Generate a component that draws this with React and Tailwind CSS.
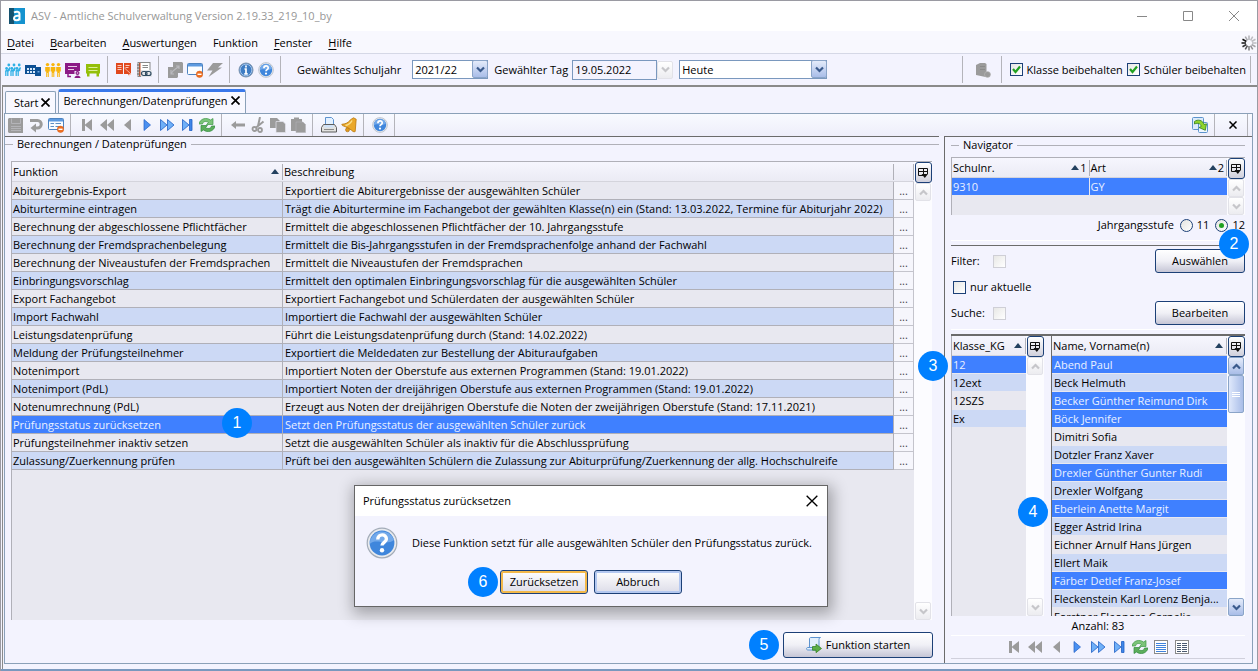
import React, { useId, useState } from "react";
import clsx from "clsx";

const FUNKTIONEN = [
  ["Abiturergebnis-Export", "Exportiert die Abiturergebnisse der ausgewählten Schüler"],
  ["Abiturtermine eintragen", "Trägt die Abiturtermine im Fachangebot der gewählten Klasse(n) ein (Stand: 13.03.2022, Termine für Abiturjahr 2022)"],
  ["Berechnung der abgeschlossene Pflichtfächer", "Ermittelt die abgeschlossenen Pflichtfächer der 10. Jahrgangsstufe"],
  ["Berechnung der Fremdsprachenbelegung", "Ermittelt die Bis-Jahrgangsstufen in der Fremdsprachenfolge anhand der Fachwahl"],
  ["Berechnung der Niveaustufen der Fremdsprachen", "Ermittelt die Niveaustufen der Fremdsprachen"],
  ["Einbringungsvorschlag", "Ermittelt den optimalen Einbringungsvorschlag für die ausgewählten Schüler"],
  ["Export Fachangebot", "Exportiert Fachangebot und Schülerdaten der ausgewählten Schüler"],
  ["Import Fachwahl", "Importiert die Fachwahl der ausgewählten Schüler"],
  ["Leistungsdatenprüfung", "Führt die Leistungsdatenprüfung durch (Stand: 14.02.2022)"],
  ["Meldung der Prüfungsteilnehmer", "Exportiert die Meldedaten zur Bestellung der Abituraufgaben"],
  ["Notenimport", "Importiert Noten der Oberstufe aus externen Programmen (Stand: 19.01.2022)"],
  ["Notenimport (PdL)", "Importiert Noten der dreijährigen Oberstufe aus externen Programmen (Stand: 19.01.2022)"],
  ["Notenumrechnung (PdL)", "Erzeugt aus Noten der dreijährigen Oberstufe die Noten der zweijährigen Oberstufe (Stand: 17.11.2021)"],
  ["Prüfungsstatus zurücksetzen", "Setzt den Prüfungsstatus der ausgewählten Schüler zurück"],
  ["Prüfungsteilnehmer inaktiv setzen", "Setzt die ausgewählten Schüler als inaktiv für die Abschlussprüfung"],
  ["Zulassung/Zuerkennung prüfen", "Prüft bei den ausgewählten Schülern die Zulassung zur Abiturprüfung/Zuerkennung der allg. Hochschulreife"],
];

const KLASSEN = ["12", "12ext", "12SZS", "Ex"];

const SCHUELER = [
  ["Abend Paul", true],
  ["Beck Helmuth", false],
  ["Becker Günther Reimund Dirk", true],
  ["Böck Jennifer", true],
  ["Dimitri Sofia", false],
  ["Dotzler Franz Xaver", false],
  ["Drexler Günther Gunter Rudi", true],
  ["Drexler Wolfgang", false],
  ["Eberlein Anette Margit", true],
  ["Egger Astrid Irina", false],
  ["Eichner Arnulf Hans Jürgen", false],
  ["Ellert Maik", false],
  ["Färber Detlef Franz-Josef", true],
  ["Fleckenstein Karl Lorenz Benja...", false],
  ["Forstner Eleonore Cornelia", false],
];

const GRAY = "#9b9b9b";
const BLUE = "#4a90f0";
const EDGE = "#1f5fc4";

const Icon = ({ children, size = 16 }) => (
  <svg width={size} height={size} viewBox="0 0 16 16" fill="none" aria-hidden="true" className="shrink-0">
    {children}
  </svg>
);

/* ---------- icons ---------- */

const People = () => (
  <Icon>
    {[1.8, 7, 12.2].map((x) => (
      <g key={x}>
        <circle cx={x + 2} cy="3" r="1.4" fill="#2fb0e6" />
        <circle cx={x - 0.2} cy="6.500" r="1.400" fill="#2fb0e6" />
        <path d={`M${x + 3.4} 5.500l-2.600 3.500M${x - 1.4} 8.800h3l1.500-1.300`} stroke="#2fb0e6" strokeWidth="1.600" />
        <path d={`M${x - 1} 9v5M${x + 1} 9v5`} stroke="#2fb0e6" strokeWidth="1.300" />
      </g>
    ))}
  </Icon>
);

const School = () => (
  <Icon>
    <path d="M0 3h11v2h5v9H10v-2H0z" fill="#0d4f94" />
    <path d="M2 6h2v2H2zM5 6h2v2H5zM8 6h2v2H8zM2 9h2v2H2zM5 9h2v2H5zM8 9h2v2H8z" fill="#d6e8fa" />
    <path d="M12.500 9h2v1.500h-2z" fill="#6fa6e0" />
  </Icon>
);

const Group = () => (
  <Icon>
    {[2.5, 8, 13.5].map((x) => (
      <g key={x} fill="#f8b50c">
        <circle cx={x} cy="2.600" r="1.700" />
        <path d={`M${x - 2.3} 5h4.600v4.500h-1V15h-1v-4h-.6v4h-1V9.500h-1z`} />
      </g>
    ))}
  </Icon>
);

const Board = () => (
  <Icon>
    <path d="M0 1h15v11H0z" fill="#8b1a86" />
    <path d="M3 4.500h9M3 7.500h6" stroke="#e8c8e6" />
    <path d="M3 12v2.500h3" stroke="#8b1a86" strokeWidth="1.500" />
    <path d="M9.500 9h6v7h-6z" fill="#f3f3fe" />
    <circle cx="12.500" cy="11" r="2" fill="#8b1a86" />
    <path d="M9.500 16c0-3.500 6-3.500 6 0z" fill="#8b1a86" />
    <circle cx="12.500" cy="11" r=".8" fill="#e8c8e6" />
  </Icon>
);

const Chat = () => (
  <Icon>
    <path d="M1 2h14v9.500H1zM2 11h2.500v3.500H2zM11.500 11H14v3.500h-2.500z" fill="#94bf0a" />
    <path d="M3.500 5.500h9M3.500 8.500h9" stroke="#dcee9a" />
  </Icon>
);

const Book = () => (
  <Icon>
    <path d="M0 1h7v11H0zM8 1h7v11H8z" fill="#e1481d" />
    <path d="M1.500 3.500h4M1.500 5.500h4M1.500 7.500h4M9.500 3.500h4M9.500 5.500h3" stroke="#fbd8cc" strokeWidth=".9" />
    <path d="M8.500 6l7 6.500-2.500.3 1 2.700" fill="#e1481d" stroke="#fff" strokeWidth=".6" />
  </Icon>
);

const AddressBook = () => (
  <Icon>
    <rect x="2" y=".5" width="12" height="14" fill="#fff" stroke="#8a8a8a" />
    <path d="M3 1h1.500v13H3z" fill="#c8542e" />
    <path d="M1 3h3M1 6h3M1 9h3M1 12h3" stroke="#666" strokeWidth="1.200" />
    <path d="M6.500 3.500H12M6.500 5.500H12" stroke="#888" />
    <path d="M5 8h11v7H5z" fill="#e4e6ea" />
    <rect x="5.500" y="9.500" width="5.500" height="4" rx="2" stroke="#2f4a60" strokeWidth="1.200" />
    <rect x="9.500" y="9.500" width="5.500" height="4" rx="2" stroke="#2f4a60" strokeWidth="1.200" />
  </Icon>
);

const GrayCopy = () => (
  <Icon>
    <path d="M6 0h9l1 1v10h-5v4l-1 1H1V5h5z" fill={GRAY} />
    <path d="M4 8v4h3M4.500 11.500C6 7.500 9 7.500 12 4M9 4h3v3" stroke="#b9b9bd" strokeWidth="1.200" />
  </Icon>
);

const FormRemove = ({ lines }) => (
  <Icon>
    <rect x=".5" y="1.500" width="15" height="11" rx="1" fill="#fbfdff" stroke="#4d83c0" />
    <path d="M1 2h14v2.500H1z" fill="#5d9ae0" />
    {lines && <path d="M2.500 6.500H6M7.500 6.500H13M2.500 9.500H6M7.500 9.500H13" stroke="#5f8fc4" />}
    <circle cx="12.500" cy="12.300" r="3.200" fill="#f07022" stroke="#d65a12" strokeWidth=".5" />
    <path d="M10.500 12.300h4" stroke="#fff" strokeWidth="1.400" />
  </Icon>
);

const Flash = () => (
  <Icon>
    <path d="M6 1h10l-5 4.500h4L1.500 15l4-6.500H0z" fill={GRAY} />
  </Icon>
);

const Info = () => (
  <Icon>
    <circle cx="8" cy="8" r="7" fill="#3e7cc4" stroke="#7d93ad" />
    <circle cx="8" cy="8" r="5.800" stroke="#b6d2f2" strokeWidth=".8" />
    <path d="M8 3.600v1.800M6.500 7H8v4.600M6.300 11.800h3.400" stroke="#fff" strokeWidth="1.700" />
  </Icon>
);

const Help = ({ size }) => (
  <Icon size={size}>
    <circle cx="8" cy="8" r="7.400" fill="#e8eaee" stroke="#a3acb8" strokeWidth=".6" />
    <circle cx="8" cy="8" r="6.200" fill="#3f86dc" />
    <path d="M1.900 8.500C5 5.500 10 9.500 14 6.500A6.200 6.200 0 0 0 1.900 8.500z" fill="#7fb2ee" opacity=".8" />
    <path d="M5.900 6.300c0-3.200 4.400-3 4.300-.3 0 1.600-2.200 1.700-2.200 3.200" stroke="#fff" strokeWidth="1.700" />
    <circle cx="8" cy="11.600" r="1.100" fill="#fff" />
  </Icon>
);

const Save = () => (
  <Icon>
    <path d="M0 2l1-1h14v15H1l-1-1z" fill={GRAY} />
    <path d="M3.500 1.500v5h9v-5M3 9.500h10M3 11.500h10M3 13.500h10" stroke="#b4b4b8" />
  </Icon>
);

const Undo = () => (
  <Icon>
    <path d="M2 3.500h7.500a3.500 3.500 0 0 1 0 7.500H7" stroke={GRAY} strokeWidth="3" />
    <path d="M8 6.500v9L2.500 11z" fill={GRAY} />
  </Icon>
);

const First = () => (
  <Icon>
    <path d="M3 2h3v12H3zM13 2v12L5.500 8z" fill={GRAY} />
  </Icon>
);
const Rewind = () => (
  <Icon>
    <path d="M8 2v12L1 8zM15 2v12L8 8z" fill={GRAY} />
  </Icon>
);
const Back = () => (
  <Icon>
    <path d="M12 2v12L5 8z" fill={GRAY} />
  </Icon>
);
const Play = () => (
  <Icon>
    <path d="M5 2.500v11L11.500 8z" fill={BLUE} stroke={EDGE} strokeWidth=".7" />
  </Icon>
);
const Forward = () => (
  <Icon>
    <path d="M1.500 2.500v11L8 8zM8.500 2.500v11L15 8z" fill="#6fb0f8" stroke={EDGE} strokeWidth=".8" />
  </Icon>
);
const Last = () => (
  <Icon>
    <path d="M3.500 2.500v11L10 8z" fill="#6fb0f8" stroke={EDGE} strokeWidth=".8" />
    <path d="M10.500 2.500H13v11h-2.500z" fill="#3f86e8" stroke={EDGE} strokeWidth=".8" />
  </Icon>
);
const Refresh = () => (
  <Icon>
    <path d="M0 7C1 1.500 7.500 0 11.500 3L14 1.500V7.500H7.500L9.500 5.500C7.500 4 4 4 3.500 7z" fill="#7cc47a" stroke="#3f9a48" strokeWidth=".7" />
    <path d="M16 9c-1 5.500-7.500 7-11.500 4L2 14.500V8.500h6.500l-2 2c2 1.500 5.500 1.500 6-1.500z" fill="#5cae5c" stroke="#2f8a3c" strokeWidth=".7" />
  </Icon>
);

const ArrowLeft = () => (
  <Icon>
    <path d="M1 8l5-4v2.500h9v3H6V12z" fill={GRAY} />
  </Icon>
);
const Cut = () => (
  <Icon>
    <path d="M10 0L8 9M13.500 4.500L5.500 11" stroke={GRAY} strokeWidth="2" />
    <circle cx="4.500" cy="12" r="2" stroke={GRAY} strokeWidth="1.800" />
    <circle cx="10" cy="13" r="2" stroke={GRAY} strokeWidth="1.800" />
  </Icon>
);
const Copy = () => (
  <Icon>
    <path d="M0 1h7l2.500 2.500V11H0z" fill={GRAY} />
    <path d="M6 4.500h7l2.500 2.500v8.500H6z" fill={GRAY} stroke="#e4e4ee" strokeWidth=".7" />
  </Icon>
);
const Paste = () => (
  <Icon>
    <path d="M1 2h3V.5h5V2h3v12H1z" fill={GRAY} />
    <path d="M6 5h7l2.500 2.500v8H6z" fill={GRAY} stroke="#b4b4b8" strokeWidth=".6" />
  </Icon>
);
const Printer = () => (
  <Icon>
    <path d="M4.500 8V.5h6l2 2V8" fill="#e4f1ff" stroke="#5d93cf" />
    <path d="M2.500 7.500h11l2 3v4.500H.5v-4.500z" fill="#e2e2e0" stroke="#5d5d5d" />
    <path d="M3.500 8h9v2.500h-9z" fill="#cfe2f8" />
    <path d="M3 12.500h10" stroke="#8a8a8a" />
  </Icon>
);
const Bell = () => (
  <Icon>
    <path d="M12.500.8l2.700 1.400-1 12.300c-1.500.9-2.800-.4-4-1.600L4 9.500C2 9 .8 8.500.8 7.300c4-.3 6-1.500 8.200-4 1-1.200 2-1.500 3.500-2.500z" fill="#eaa82b" stroke="#b9770f" strokeWidth=".8" />
    <path d="M11 3.500C9.500 6.500 7 8 4.500 8.500" stroke="#fbe08c" strokeWidth="1.500" />
    <circle cx="6.500" cy="12.800" r="2" fill="#e09a1c" stroke="#a9690c" strokeWidth=".6" />
  </Icon>
);
const Export = () => (
  <Icon>
    <rect x=".5" y=".5" width="11" height="12" rx="1" fill="#dcebfb" stroke="#5b93cc" />
    <rect x="6.500" y="5.500" width="9" height="10" rx="1" fill="#eef6ff" stroke="#5b93cc" />
    <path d="M2.500 4.500c3-2.500 8.500-1.500 9.500 3l2.500-.7-1.200 6.500L7 10.500l2.200-1C8.500 6.500 6 5.500 2.500 7z" fill="#8ed42c" stroke="#2f7d1a" strokeWidth=".8" />
  </Icon>
);
const GrayDb = () => (
  <Icon>
    <path d="M1 3l4-2h5l1.500 1v8H13l2.500 2-1 3h-4L1 13z" fill={GRAY} />
    <path d="M5 4.500h5M5 7.500h5" stroke="#8a8a8a" />
    <circle cx="12.500" cy="12.500" r="3" fill={GRAY} stroke="#c0c0c0" strokeWidth=".5" />
  </Icon>
);
const Script = () => (
  <Icon>
    <path d="M4.500.5h10c-1.500.5-1.500 1.500-1.500 3V13H2c-2 0-2-2.500 0-2.500h1.500V2C3.500 1 4 .5 4.500.5z" fill="#e2effc" stroke="#5d93cf" />
    <path d="M2 10.500h7" stroke="#5d93cf" />
    <path d="M6.500 9.500H10V7l5.500 4.500L10 15.700v-2.500H6.500z" fill="#5cae46" stroke="#2f7d1a" strokeWidth=".7" />
  </Icon>
);
const ListIcon = ({ split }) => (
  <Icon>
    <rect x="1.500" y="1.500" width="13" height="13" fill="#fff" stroke="#8a8a8a" />
    {split ? (
      <path d="M3 4.500h4M8 4.500h5M3 6.500h4M8 6.500h5M3 8.500h4M8 8.500h5M3 10.500h4M8 10.500h5M3 12.500h4M8 12.500h5" stroke="#4a5a70" />
    ) : (
      <path d="M3 4.500h10M3 6.500h10M3 8.500h10M3 10.500h10M3 12.500h10" stroke="#3f82dc" />
    )}
  </Icon>
);

const Spinner = () => (
  <svg width="16" height="16" viewBox="0 0 16 16" aria-hidden="true">
    {Array.from({ length: 12 }, (_, i) => (
      <path
        key={i}
        d="M8 .5v4.500"
        stroke="#111"
        strokeWidth="1.500"
        transform={`rotate(${i * 30} 8 8)`}
        opacity={[0.3, 0.25, 0.25, 0.25, 0.35, 0.45, 0.55, 0.7, 0.85, 1, 1, 0.35][i]}
      />
    ))}
  </svg>
);

const SortUp = () => (
  <svg width="8" height="5" viewBox="0 0 8 5" aria-hidden="true" className="mr-px shrink-0">
    <path d="M4 0l4 5H0z" fill="#23415f" />
  </svg>
);

const Chevron = ({ up, color = "#3a5a8c" }) => (
  <svg width="9" height="7" viewBox="0 0 9 7" aria-hidden="true">
    <path d={up ? "M1 5.500l3.500-3.500L8 5.500" : "M1 1.500L4.500 5 8 1.500"} fill="none" stroke={color} strokeWidth="2.200" />
  </svg>
);

const Cross = ({ size = 9, width = 1.7 }) => (
  <svg width={size} height={size} viewBox="0 0 9 9" aria-hidden="true">
    <path d="M.5.5l8 8M8.500.5l-8 8" stroke="#000" strokeWidth={width} />
  </svg>
);

/* ---------- small controls ---------- */

const Tool = ({ label, children }) => (
  <button aria-label={label} className="flex h-5 w-5 shrink-0 items-center justify-center">
    {children}
  </button>
);

const Sep = () => <div className="ml-1 mr-1.5 w-px shrink-0 self-stretch bg-[#b4b4ba]" />;

const Badge = ({ n, className }) => (
  <span
    className={clsx(
      "flex h-[30px] w-[30px] shrink-0 items-center justify-center rounded-full bg-[#0080ff] font-['Liberation_Sans',sans-serif] text-base leading-none text-white",
      className
    )}
  >
    {n}
  </span>
);

const Button = ({ children, className }) => (
  <button
    className={clsx(
      "flex items-center justify-center gap-1 rounded-[3px] border border-[#1c4077] bg-linear-to-b from-white via-[#f0f0f6] to-[#c6c6d6]",
      className
    )}
  >
    {children}
  </button>
);

const ArrowCap = ({ disabled, up }) => (
  <span
    className={clsx(
      "flex h-[18px] w-4 items-center justify-center rounded-[2px] border",
      disabled
        ? "border-[#e2e2e8] bg-linear-to-b from-white to-[#ececf0]"
        : "border-[#8aa4c8] bg-linear-to-b from-[#e4ebfa] to-[#a9bde8]"
    )}
  >
    <Chevron up={up} color={disabled ? "#c6c6ca" : "#3a5a8c"} />
  </span>
);

const Select = ({ label, options, className }) => (
  <div className={clsx("relative h-[19px]", className)}>
    <select
      aria-label={label}
      className="h-full w-full appearance-none rounded-none border border-[#7a98be] bg-white px-0.5 leading-4 outline-none"
    >
      {options.map((o) => (
        <option key={o}>{o}</option>
      ))}
    </select>
    <span className="pointer-events-none absolute right-0 top-0 flex">
      <ArrowCap />
    </span>
  </div>
);

// labelFirst puts the text left of the box
const Check = ({ label, initial = false, disabled = false, labelFirst = false }) => {
  const [on, setOn] = useState(initial);
  const id = useId();
  return (
    <div className={clsx("flex items-center", labelFirst ? "flex-row-reverse gap-3" : "gap-1")}>
      <span className="grid h-[13px] w-[13px] shrink-0">
        <input
          id={id}
          type="checkbox"
          checked={on}
          disabled={disabled}
          onChange={() => setOn(!on)}
          className={clsx(
            "col-start-1 row-start-1 h-[13px] w-[13px] appearance-none border bg-linear-to-br from-[#e8e8e6] to-white",
            disabled ? "border-[#cfcfd6]" : "border-[#1c4077]"
          )}
        />
        {on && (
          <svg viewBox="0 0 13 13" className="pointer-events-none col-start-1 row-start-1" aria-hidden="true">
            <path d="M3 6l2.500 3L10 3.500" fill="none" stroke="#21a121" strokeWidth="2.200" />
          </svg>
        )}
      </span>
      <label htmlFor={id} className={clsx(labelFirst && "w-[30px] whitespace-nowrap")}>
        {label}
      </label>
    </div>
  );
};

const Radio = ({ value, checked, onChange }) => (
  <label className="flex items-center gap-1">
    <span className="grid h-[13px] w-[13px] place-items-center">
      <input
        type="radio"
        name="jahrgang"
        checked={checked}
        onChange={onChange}
        className="col-start-1 row-start-1 h-[13px] w-[13px] appearance-none rounded-full border border-[#1c4077] bg-linear-to-br from-[#e4e4e0] to-white"
      />
      {checked && <span className="pointer-events-none z-10 col-start-1 row-start-1 h-[5px] w-[5px] rounded-full bg-[#21a121]" />}
    </span>
    {value}
  </label>
);

const ColumnControl = () => (
  <button
    aria-label="Spalten auswählen"
    className="flex h-[21px] w-[17px] shrink-0 items-center justify-center rounded-[3px] border border-[#1c4077] bg-linear-to-b from-white to-[#d0d0dc]"
  >
    <svg width="11" height="12" viewBox="0 0 11 12" aria-hidden="true">
      <path d="M5 8.500H.5v-7h9V7M.5 4.500h9M5.500 1.500v6" fill="none" stroke="#111" />
      <path d="M3.500 7H10L6.800 11z" fill="#111" />
    </svg>
  </button>
);

const ScrollColumn = ({ active }) => (
  <div className="flex w-[18px] shrink-0 flex-col items-center bg-[#fcfcff]">
    <ColumnControl />
    <ArrowCap up disabled={!active} />
    {active && (
      <div className="flex h-[38px] w-4 flex-col items-center justify-center gap-px rounded-[2px] border border-[#8aa4c8] bg-linear-to-r from-[#dfe8fb] to-[#a9bde8]">
        <div className="h-px w-2 bg-white" />
        <div className="h-px w-2 bg-white" />
        <div className="h-px w-2 bg-white" />
      </div>
    )}
    <div className="flex-1" />
    <ArrowCap disabled={!active} />
  </div>
);

const Legend = ({ children }) => (
  <div className="flex h-3.5 shrink-0 items-center gap-1">
    <div className="h-px w-2 bg-[#b0b0b8]" />
    <h2>{children}</h2>
    <div className="h-px flex-1 bg-[#b0b0b8]" />
  </div>
);

const Th = ({ children, sort, order }) => (
  <th className="h-5 border-b border-[#d4d4dc] bg-linear-to-b from-[#f6f6fe] to-[#ebebf4] p-0 font-normal">
    <div className="flex h-4 items-center border-r border-[#b0b0b8] pl-px pr-0.5">
      <span className="flex-1 text-left">{children}</span>
      {sort && <SortUp />}
      {order}
    </div>
  </th>
);

const rowColor = (i, selected) => (selected ? "bg-[#3f80ff] text-[#eaf0ff]" : i % 2 ? "bg-[#ccd9f5]" : "bg-[#e8e8f0]");

const NavButtons = () => (
  <>
    <Tool label="Erster"><First /></Tool>
    <Tool label="Schnell zurück"><Rewind /></Tool>
    <Tool label="Zurück"><Back /></Tool>
    <Tool label="Weiter"><Play /></Tool>
    <Tool label="Schnell weiter"><Forward /></Tool>
    <Tool label="Letzter"><Last /></Tool>
    <Tool label="Aktualisieren"><Refresh /></Tool>
  </>
);

/* ---------- sections ---------- */

const TitleBar = () => (
  <header className="flex h-[30px] shrink-0 items-center bg-white pl-2 text-[#979797]">
    <svg width="16" height="16" viewBox="0 0 16 16" aria-hidden="true">
      <path d="M0 0h16v16H0z" fill="#1593cf" />
      <path d="M0 0h5v16H0z" fill="#15526f" />
      <path d="M5 4.500c2-1.300 5.500-1.300 5.500 1.500v6.500M10.500 8C7.500 7.500 5 8 5 10.300c0 2.700 4.500 2.700 5.500 0" fill="none" stroke="#fff" strokeWidth="2" />
    </svg>
    <h1 className="ml-1.5 flex-1">ASV - Amtliche Schulverwaltung Version 2.19.33_219_10_by</h1>
    <div className="flex gap-9 pr-[18px]">
      <button aria-label="Minimieren">
        <svg width="10" height="10"><path d="M0 5.500h10" stroke="#888" /></svg>
      </button>
      <button aria-label="Maximieren">
        <svg width="10" height="10"><path d="M.5.5h9v9h-9z" fill="none" stroke="#888" /></svg>
      </button>
      <button aria-label="Schließen">
        <svg width="10" height="10"><path d="M0 0l10 10M10 0L0 10" stroke="#888" /></svg>
      </button>
    </div>
  </header>
);

const MENU = [
  ["D", "atei"],
  ["B", "earbeiten"],
  ["A", "uswertungen"],
  ["", "Funktion"],
  ["F", "enster"],
  ["H", "ilfe"],
];

const MenuBar = () => (
  <nav className="flex h-[23px] shrink-0 items-center gap-4 border-b border-[#d5d8e6] bg-[#f8f8fe] pl-1.5 pt-0.5">
    {MENU.map(([key, rest]) => (
      <button key={rest}>
        <span className="underline underline-offset-2">{key}</span>
        {rest}
      </button>
    ))}
    <span className="ml-auto">
      <Spinner />
    </span>
  </nav>
);

const MainToolbar = () => (
  <div className="flex h-[31px] shrink-0 items-center py-0.5 pl-0.5">
    <Tool label="Klassen"><People /></Tool>
    <Tool label="Schule"><School /></Tool>
    <Tool label="Schüler"><Group /></Tool>
    <Tool label="Unterricht"><Board /></Tool>
    <Tool label="Nachrichten"><Chat /></Tool>
    <Sep />
    <Tool label="Handbuch"><Book /></Tool>
    <Tool label="Adressen"><AddressBook /></Tool>
    <Sep />
    <Tool label="Übernehmen"><GrayCopy /></Tool>
    <Tool label="Formular schließen"><FormRemove /></Tool>
    <Tool label="Ausführen"><Flash /></Tool>
    <Sep />
    <Tool label="Info"><Info /></Tool>
    <Tool label="Hilfe"><Help size={16} /></Tool>
    <Sep />
    <span className="ml-2.5 mr-[11px]">Gewähltes Schuljahr</span>
    <Select label="Schuljahr" options={["2021/22"]} className="w-[76px]" />
    <label htmlFor="tag" className="ml-1.5 mr-1">Gewählter Tag</label>
    <input id="tag" readOnly defaultValue="19.05.2022" className="h-5 w-[85px] border border-[#7a98be] bg-[#f3f3fe] px-0.5 outline-none" />
    <ArrowCap disabled />
    <Select label="Zeitraum" options={["Heute"]} className="ml-1.5 w-[148px]" />
    <div className="ml-auto flex items-center self-stretch">
      <div className="mr-2.5 w-px self-stretch bg-[#b4b4ba]" />
      <Tool label="Datenbank"><GrayDb /></Tool>
      <div className="mx-2 w-px self-stretch bg-[#b4b4ba]" />
      <div className="flex gap-1">
        <Check label="Klasse beibehalten" initial />
        <Check label="Schüler beibehalten" initial />
      </div>
      <div className="ml-1 mr-1.5 w-px self-stretch bg-[#b4b4ba]" />
    </div>
  </div>
);

const Tabs = () => (
  <div className="flex h-[26px] shrink-0 items-end gap-0.5 pl-0.5" role="tablist">
    <div className="flex h-[22px] items-center gap-[3px] rounded-t-[2px] border border-b-0 border-[#8aa0b8] bg-[#f8f8ff] pl-2 pr-[5px]">
      <button role="tab" aria-selected="false">Start</button>
      <button aria-label="Start schließen"><Cross /></button>
    </div>
    <div className="flex h-6 items-center gap-[3px] rounded-t-[3px] border border-b-0 border-t-3 border-[#8aa0b8] border-t-[#3a78ea] bg-[#f8f8ff] pl-1 pr-[5px] pb-1">
      <button role="tab" aria-selected="true">Berechnungen/Datenprüfungen</button>
      <button aria-label="Berechnungen schließen"><Cross /></button>
    </div>
  </div>
);

const PanelToolbar = () => (
  <div className="flex h-[22px] shrink-0 items-center bg-linear-to-b from-[#f8faff] to-[#eeeefa] pl-px">
    <Tool label="Speichern"><Save /></Tool>
    <Tool label="Rückgängig"><Undo /></Tool>
    <Tool label="Formular"><FormRemove lines /></Tool>
    <Sep />
    <NavButtons />
    <Sep />
    <Tool label="Einfügen"><ArrowLeft /></Tool>
    <Tool label="Ausschneiden"><Cut /></Tool>
    <Tool label="Kopieren"><Copy /></Tool>
    <Tool label="Einsetzen"><Paste /></Tool>
    <Sep />
    <Tool label="Drucken"><Printer /></Tool>
    <Tool label="Benachrichtigung"><Bell /></Tool>
    <Sep />
    <Tool label="Hilfe"><Help size={16} /></Tool>
    <Sep />
    <div className="ml-auto flex items-center self-stretch pr-1">
      <Tool label="Export"><Export /></Tool>
      <div className="mx-1 w-px self-stretch bg-[#b4b4ba]" />
      <div className="px-1">
        <Tool label="Schließen"><Cross size={8} /></Tool>
      </div>
      <div className="w-px self-stretch bg-[#b4b4ba]" />
    </div>
  </div>
);

const FunctionPane = () => (
  <section className="flex min-w-0 flex-1 flex-col border-t border-[#6b6b6b]">
    <Legend>Berechnungen / Datenprüfungen</Legend>
    <div className="ml-1.5 mr-[7px] mt-2.5 flex min-h-0 flex-1 border-l border-t border-[#b0b0b8] bg-[#e8e8f0]">
      <div className="min-w-0 flex-1">
        <table className="w-full table-fixed border-separate border-spacing-0">
          <colgroup>
            <col className="w-[271px]" />
            <col />
            <col className="w-5" />
          </colgroup>
          <thead>
            <tr>
              <Th sort>Funktion</Th>
              <Th>Beschreibung</Th>
              <Th />
            </tr>
          </thead>
          <tbody>
            {FUNKTIONEN.map(([name, text], i) => (
              <tr key={name} className={rowColor(i, i === 13)}>
                <td className="relative h-[18px] whitespace-nowrap border-b border-r border-[#b0b0b8] p-0 pl-px">
                  {name}
                  {i === 13 && <Badge n="1" className="absolute -top-2 left-[210px] z-10" />}
                </td>
                <td className="h-[18px] overflow-hidden whitespace-nowrap border-b border-r border-[#b0b0b8] p-0 pl-0.5">{text}</td>
                <td className="h-[18px] border-b border-r border-[#c4c4cc] bg-[#f6f6fc] p-0 text-center text-[#444]">
                  <button aria-label={`${name} Details`} className="block w-full leading-4">...</button>
                </td>
              </tr>
            ))}
          </tbody>
        </table>
      </div>
      <ScrollColumn />
    </div>
    <div className="flex justify-end gap-1 pb-[3px] pr-1.5 pt-[10px]">
      <Badge n="5" />
      <Button className="my-0.5 h-[26px] w-[150px]">
        <Script />
        Funktion starten
      </Button>
    </div>
  </section>
);

const Navigator = () => {
  const [jahrgang, setJahrgang] = useState("12");
  return (
    <aside className="flex w-[308px] shrink-0 flex-col border-l border-t border-[#6b6b6b] pl-1.5 pr-[7px] pt-px">
      <Legend>Navigator</Legend>
      <div className="mt-[5px] flex h-[58px] shrink-0 border-l border-t border-[#b0b0b8] bg-[#e8e8f0]">
        <div className="flex-1">
          <table className="w-full table-fixed border-separate border-spacing-0">
            <thead>
              <tr>
                <Th sort order="1">Schulnr.</Th>
                <Th sort order="2">Art</Th>
              </tr>
            </thead>
            <tbody>
              <tr className="bg-[#3f80ff] text-[#eaf0ff]">
                <td className="h-[18px] border-b border-r border-[#e8e8f0] p-0 pl-px">9310</td>
                <td className="h-[18px] border-b border-[#e8e8f0] p-0 pl-px">GY</td>
              </tr>
            </tbody>
          </table>
        </div>
        <ScrollColumn />
      </div>
      <div className="flex h-5 shrink-0 items-center justify-end gap-1.5">
        <span>Jahrgangsstufe</span>
        <Radio value="11" checked={jahrgang === "11"} onChange={() => setJahrgang("11")} />
        <Radio value="12" checked={jahrgang === "12"} onChange={() => setJahrgang("12")} />
      </div>
      <div className="mt-[5px] h-1.5 shrink-0 border-t border-b border-b-[#6b6b6b] border-t-white" />
      <div className="flex shrink-0 flex-col gap-[3px] border-b border-white pb-1 pt-[3px]">
        <div className="flex items-center">
          <Check label="Filter:" disabled labelFirst />
          <div className="relative ml-auto">
            <Button className="h-6 w-[90px]">Auswählen</Button>
            <Badge n="2" className="absolute -right-1 -top-5 z-10" />
          </div>
        </div>
        <div className="flex h-[22px] items-center pl-0.5">
          <Check label="nur aktuelle" />
        </div>
        <div className="flex items-center">
          <Check label="Suche:" disabled labelFirst />
          <Button className="ml-auto h-6 w-[90px]">Bearbeiten</Button>
        </div>
      </div>
      <div className="mt-1 flex min-h-0 flex-1 border-t-2 border-[#6b6b6b]">
        <div className="relative flex w-[93px] shrink-0 border-l border-[#b0b0b8] bg-[#e8e8f0]">
          <div className="flex-1">
            <table className="w-full table-fixed border-separate border-spacing-0">
              <thead>
                <tr>
                  <Th sort>Klasse_KG</Th>
                </tr>
              </thead>
              <tbody>
                {KLASSEN.map((k, i) => (
                  <tr key={k} className={rowColor(i, i === 0)}>
                    <td className="h-[18px] border-b border-[#e8e8f0] p-0 pl-px">{k}</td>
                  </tr>
                ))}
              </tbody>
            </table>
          </div>
          <ScrollColumn />
          <Badge n="3" className="absolute -left-[34px] top-[15px] z-10" />
          <Badge n="4" className="absolute -right-1 top-[161px] z-10" />
        </div>
        <div className="ml-[7px] flex min-w-0 flex-1 overflow-hidden border-l border-[#6b6b6b] bg-[#e8e8f0]">
          <div className="min-w-0 flex-1 overflow-hidden">
            <table className="w-full table-fixed border-separate border-spacing-0">
              <thead>
                <tr>
                  <Th sort>Name, Vorname(n)</Th>
                </tr>
              </thead>
              <tbody>
                {SCHUELER.map(([name, selected], i) => (
                  <tr key={name} className={rowColor(i, selected)}>
                    <td className="h-[18px] whitespace-nowrap border-b border-[#e8e8f0] p-0 pl-0.5">{name}</td>
                  </tr>
                ))}
              </tbody>
            </table>
          </div>
          <ScrollColumn active />
        </div>
      </div>
      <div className="flex h-5 shrink-0 items-center justify-center border-b border-white">Anzahl: 83</div>
      <div className="mb-1 flex h-[23px] shrink-0 items-center justify-center gap-px border-b border-[#d0d0dc]">
        <NavButtons />
        <Tool label="Liste"><ListIcon /></Tool>
        <Tool label="Detailliste"><ListIcon split /></Tool>
      </div>
    </aside>
  );
};

const ResetDialog = () => (
  <div
    role="dialog"
    aria-labelledby="dialog-title"
    className="absolute left-[353px] top-[484px] z-20 w-[474px] border border-[#666] bg-[#f3f3fe] shadow-[2px_4px_14px_3px_rgba(0,0,0,0.3)]"
  >
    <div className="flex h-[30px] items-center justify-between bg-white pl-2 pr-[9px]">
      <h2 id="dialog-title">Prüfungsstatus zurücksetzen</h2>
      <button aria-label="Dialog schließen"><Cross size={12} width={1} /></button>
    </div>
    <div className="flex items-center gap-3.5 pl-[11px] pt-[11px]">
      <Help size={32} />
      <p className="whitespace-nowrap">Diese Funktion setzt für alle ausgewählten Schüler den Prüfungsstatus zurück.</p>
    </div>
    <div className="flex items-center pb-[9px] pl-[113px] pt-2">
      <Badge n="6" />
      <button className="ml-0.5 h-6 w-[88px] rounded-[3px] border border-[#1c4077] bg-linear-to-b from-white to-[#dcdce8] shadow-[inset_0_0_0_2px_#f3b94a]">
        Zurücksetzen
      </button>
      <button className="ml-1.5 h-6 w-[88px] rounded-[3px] border border-[#1c4077] bg-linear-to-b from-white to-[#dcdce8] shadow-[inset_0_0_0_2px_#b4c8f0]">
        Abbruch
      </button>
    </div>
  </div>
);

export default function App() {
  return (
    <div className="relative flex h-screen flex-col overflow-hidden border-l border-r border-t border-[#9a9aa2] bg-[#f3f3fe] font-['Open_Sans',sans-serif] text-[11px] leading-4 text-black">
      <TitleBar />
      <MenuBar />
      <MainToolbar />
      <main className="ml-px flex min-h-0 flex-1 flex-col border-l border-t-2 border-[#8a8a8a] pb-[5px] pr-1">
        <Tabs />
        <div className="ml-px flex min-h-0 flex-1 flex-col border border-[#8aa0b8]">
          <PanelToolbar />
          <div className="flex min-h-0 flex-1 gap-[5px]">
            <FunctionPane />
            <Navigator />
          </div>
        </div>
      </main>
      <div className="h-0.5 shrink-0 bg-[#7a98be]" />
      <ResetDialog />
    </div>
  );
}
